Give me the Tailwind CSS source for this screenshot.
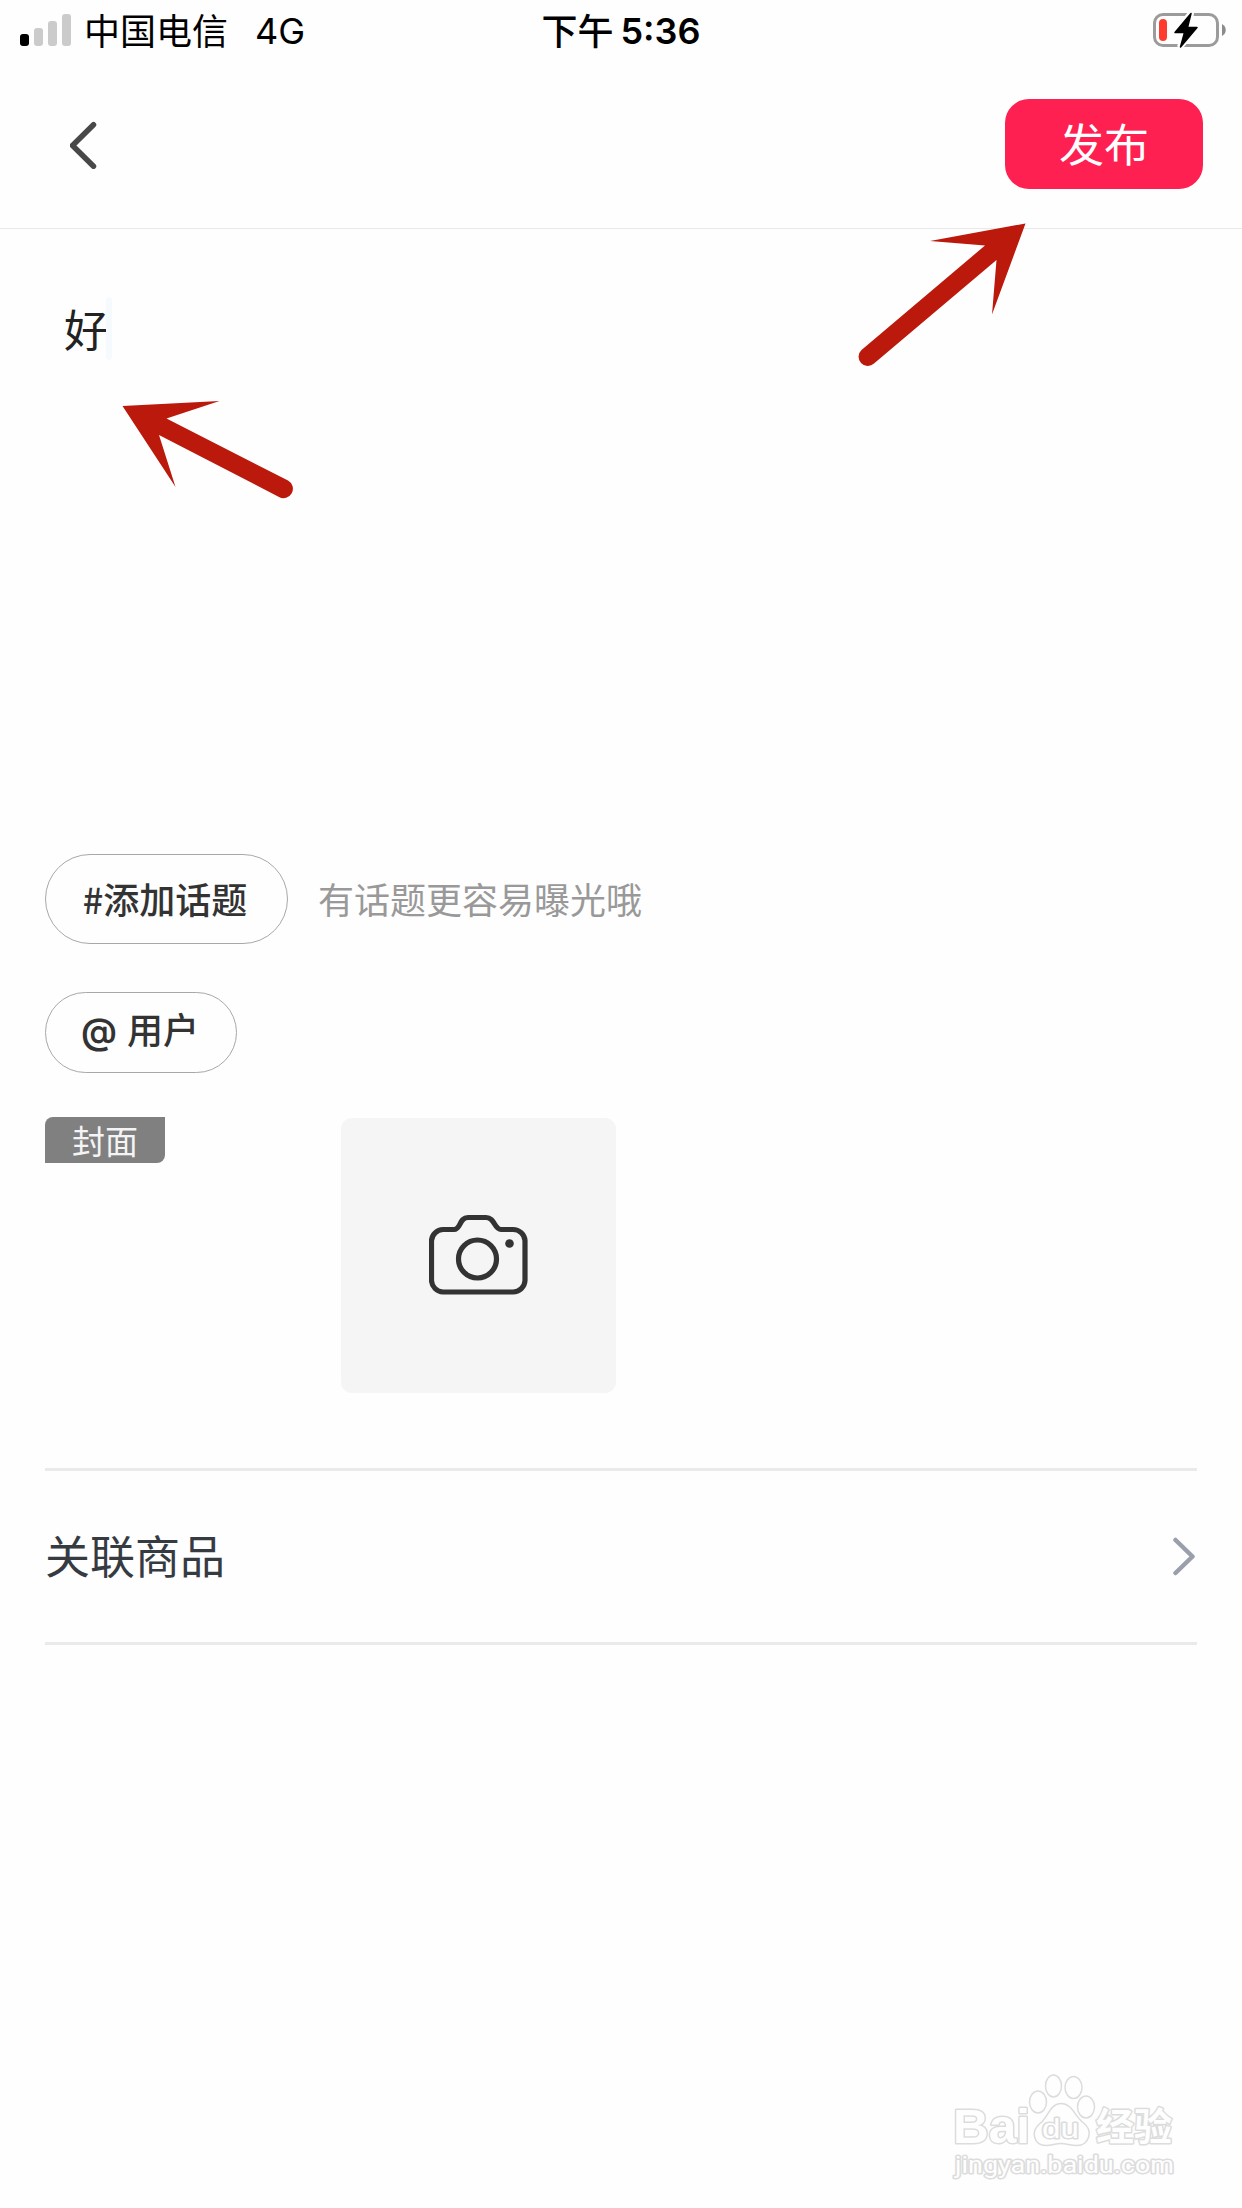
<!DOCTYPE html>
<html lang="zh-CN">
<head>
  <meta charset="UTF-8" />
  <meta name="viewport" content="width=device-width, initial-scale=1.0"/>
  <title>发布</title>
  <script src="https://cdn.jsdelivr.net/npm/@tailwindcss/browser@4"></script>
</head>
<body class="bg-[#fefefe] font-['Inter','Noto_Sans_CJK_SC',sans-serif]">
<div class="relative w-[1242px] h-[2208px] overflow-hidden flex flex-col">

  <!-- Status bar -->
  <div class="h-[60px] shrink-0 grid grid-cols-3 grid-rows-[60px] pl-5 pr-4 text-[36px] leading-[52px] text-black">
    <div class="flex items-center">
      <div class="flex items-end gap-[5px] h-8 mr-[13px]">
        <span class="w-[9px] h-3 rounded-[3px] bg-black"></span>
        <span class="w-[9px] h-[18px] rounded-[3px] bg-[#cbcbcb]"></span>
        <span class="w-[9px] h-[25px] rounded-[3px] bg-[#cbcbcb]"></span>
        <span class="w-[9px] h-8 rounded-[3px] bg-[#cbcbcb]"></span>
      </div>
      <span class="pb-0.5 font-['Noto_Sans_CJK_SC',sans-serif]">中国电信</span>
      <span class="ml-[27px] pt-0.5">4G</span>
    </div>
    <div class="flex items-center justify-center whitespace-nowrap pr-1">
      <span class="pb-0.5 font-['Noto_Sans_CJK_SC',sans-serif] font-medium">下午</span>
      <span class="ml-[7px] pt-0.5 font-semibold">5:36</span>
    </div>
    <div class="flex items-center justify-end">
      <svg class="w-[74px] h-10" viewBox="0 0 74 40">
        <rect x="2.5" y="4.500" width="63" height="31" rx="8.500" fill="none" stroke="#9b9b9b" stroke-width="3"/>
        <rect x="7" y="9" width="8" height="22" rx="4" fill="#ff3b30"/>
        <path d="M70 14c5 2.500 5 9.500 0 12z" fill="#8c8c8c"/>
        <path d="M39 3L23 23h9l-4 14 17-20h-8z" fill="#000" stroke="#fefefe" stroke-width="6"/>
        <path d="M39 3.500L23 22.500h9.500L28.500 37 45 17.500h-9.500z" fill="#000" stroke="#000" stroke-width="1.500" stroke-linejoin="round"/>
      </svg>
    </div>
  </div>

  <!-- Header -->
  <header class="h-[169px] shrink-0 flex items-start justify-between pl-[70px] pr-[39px] pt-[39px] border-b border-[#e9e9e9]">
    <svg class="w-[27px] h-12 mt-[22px]" viewBox="0 0 27 48">
      <path d="M23.500 3.700L2.500 24.500l21 20.700" fill="none" stroke="#484848" stroke-width="5.500" stroke-linecap="round" stroke-linejoin="round"/>
    </svg>
    <button class="w-[198px] h-[90px] rounded-[24px] bg-[#ff2052] text-white text-[45px] leading-[87px] pb-[3px] font-['Noto_Sans_CJK_SC',sans-serif]">发布</button>
  </header>

  <!-- Post text -->
  <div class="h-[625px] shrink-0 pl-[64px] pt-[68px]">
    <div class="flex items-center h-[63px]">
      <span class="text-[44px] leading-[63px] text-[#222] w-[42px] whitespace-nowrap font-['Noto_Sans_CJK_SC',sans-serif]">好</span>
      <span class="w-1.5 h-[63px] rounded-[3px] bg-[#f5faff]"></span>
    </div>
  </div>

  <!-- Topic / mention -->
  <div class="flex items-center h-[90px] shrink-0 pl-[45px] text-[36px] font-['Noto_Sans_CJK_SC',sans-serif]">
    <button class="w-[243px] h-[90px] rounded-full border border-[#a8a8a8] font-medium text-[#333] pr-[3px] pb-0.5">#添加话题</button>
    <span class="ml-[30px] pb-0.5 text-[#999]">有话题更容易曝光哦</span>
  </div>
  <div class="mt-12 ml-[45px]">
    <button class="flex items-center w-[192px] h-[81px] rounded-full border border-[#a8a8a8] pl-[35px] text-[36px] font-medium text-[#333]">
      <span class="pb-1 font-semibold font-['Inter',sans-serif]">@</span>
      <span class="ml-[10px] pb-2.5 text-[36px] font-['Noto_Sans_CJK_SC',sans-serif]">用户</span>
    </button>
  </div>

  <!-- Photos -->
  <div class="mt-11 mx-[45px] flex items-start gap-[21px]">
    <div class="w-[275px] h-[275px]">
      <div class="w-[120px] h-[46px] rounded-tl-lg rounded-br-lg bg-[#808080] text-[#f4f4f4] text-[33px] leading-[46px] text-center font-['Noto_Sans_CJK_SC',sans-serif]">封面</div>
    </div>
    <div class="mt-px w-[275px] h-[275px] rounded-[11px] bg-[#f5f5f5] flex items-center justify-center">
      <svg class="w-[100px] h-[82px] mb-0.5" viewBox="0 0 100 82" fill="none" stroke="#333" stroke-width="5.200">
        <path d="M14 15.500h11c7 0 5-12 14-12h18c9 0 8 12 15 12h12a12 12 0 0 1 12 11v40a12 12 0 0 1-12 11.500H14A12 12 0 0 1 2.500 66.500v-40a12 12 0 0 1 11.500-11z"/>
        <circle cx="48.500" cy="45" r="19"/>
        <circle cx="80.500" cy="29.500" r="4.300" fill="#333" stroke="none"/>
      </svg>
    </div>
  </div>

  <!-- Linked goods -->
  <div class="mt-[75px] mx-[45px] h-[177px] shrink-0 flex items-center justify-between border-y-3 border-[#e9eaec]">
    <span class="pb-1 text-[45px] text-[#363b42] font-['Noto_Sans_CJK_SC',sans-serif]">关联商品</span>
    <svg class="w-6 h-10" viewBox="0 0 24 40">
      <path d="M2.500 3L19.500 19.500 2.500 36" fill="none" stroke="#9a9fab" stroke-width="4.500" stroke-linecap="round" stroke-linejoin="round"/>
    </svg>
  </div>

  <!-- Pointer arrows -->
  <svg class="absolute inset-0 w-[1242px] h-[2208px]" viewBox="0 0 1242 2208" fill="#bb190b">
    <path d="M1025.500 223.500L930 241l55 4.500L861.500 350a9 9 0 0 0 12.500 13.500L996.500 260l-4.500 54.500z"/>
    <path d="M122.500 406L219.500 401l-53 17.500L288 480.500a9 9 0 0 1-9 16.500L159 435l16.500 52z"/>
  </svg>

  <!-- Watermark -->
  <svg class="absolute left-[930px] top-[2050px] w-[270px] h-[158px]" viewBox="0 0 270 158" fill="#fefefe" stroke="#dcdcdc" stroke-width="1.500">
    <ellipse cx="108" cy="52" rx="8.500" ry="11"/>
    <ellipse cx="123.500" cy="36" rx="8" ry="11"/>
    <ellipse cx="143.500" cy="37.500" rx="8.500" ry="11"/>
    <ellipse cx="156" cy="57" rx="8.500" ry="11"/>
    <path d="M131 53.500c11 0 14 13 22 19 11 8 6 23-6 23-7 0-10-2-16-2s-9 2-15 2c-12 0-16-14-6-22 8-6 10-20 21-20z"/>
    <g font-weight="700" paint-order="stroke" stroke-width="3" stroke-linejoin="round">
      <text x="23" y="93" font-size="49" textLength="77" lengthAdjust="spacingAndGlyphs" font-family="'Liberation Sans', sans-serif">Bai</text>
      <text x="112" y="87.500" font-size="28" font-weight="500" textLength="37" lengthAdjust="spacingAndGlyphs" font-family="'Liberation Sans', sans-serif">du</text>
      <text x="166" y="90" font-size="38" textLength="76" lengthAdjust="spacingAndGlyphs" font-family="'Noto Sans CJK SC', sans-serif">经验</text>
      <text x="25" y="122.500" font-size="23" font-weight="400" font-family="Roboto, sans-serif" textLength="219" lengthAdjust="spacingAndGlyphs">jingyan.baidu.com</text>
    </g>
  </svg>
</div>
</body>
</html>
